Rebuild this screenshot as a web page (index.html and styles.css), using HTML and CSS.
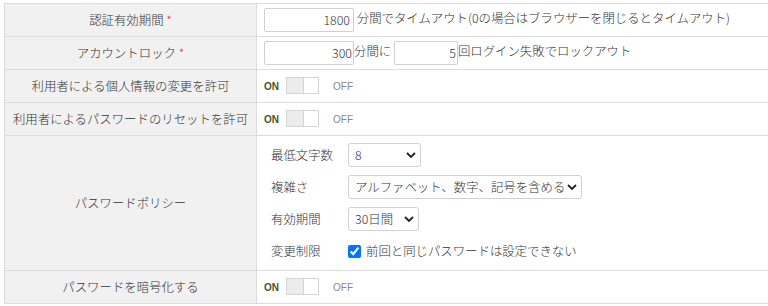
FILE: index.html
```html
<!DOCTYPE html>
<html lang="ja">
<head>
<meta charset="utf-8">
<link rel="stylesheet" href="styles.css">
</head>
<body>
<table class="settings">
  <tr>
    <th>認証有効期間 <span class="req">*</span></th>
    <td><input class="num w90" type="text" value="1800"> 分間でタイムアウト(0の場合はブラウザーを閉じるとタイムアウト)</td>
  </tr>
  <tr>
    <th>アカウントロック <span class="req">*</span></th>
    <td><input class="num tight w90" type="text" value="300">分間に <input class="num tight w64" type="text" value="5">回ログイン失敗でロックアウト</td>
  </tr>
  <tr>
    <th>利用者による個人情報の変更を許可</th>
    <td><div class="toggle"><span class="on">ON</span><span class="sw"><span class="knob"></span></span><span class="off">OFF</span></div></td>
  </tr>
  <tr>
    <th>利用者によるパスワードのリセットを許可</th>
    <td><div class="toggle"><span class="on">ON</span><span class="sw"><span class="knob"></span></span><span class="off">OFF</span></div></td>
  </tr>
  <tr class="policy-row">
    <th>パスワードポリシー</th>
    <td>
      <div class="policy">
        <div class="prow">
          <span class="plabel">最低文字数</span>
          <span class="sel w72"><select><option>8</option></select><svg class="chev" viewBox="0 0 10 6" width="10" height="6"><path d="M1 1 L5 5 L9 1" fill="none" stroke="#222" stroke-width="1.8"/></svg></span>
        </div>
        <div class="prow">
          <span class="plabel">複雑さ</span>
          <span class="sel w233"><select><option>アルファベット、数字、記号を含める</option></select><svg class="chev" viewBox="0 0 10 6" width="10" height="6"><path d="M1 1 L5 5 L9 1" fill="none" stroke="#222" stroke-width="1.8"/></svg></span>
        </div>
        <div class="prow">
          <span class="plabel">有効期間</span>
          <span class="sel w70"><select><option>30日間</option></select><svg class="chev" viewBox="0 0 10 6" width="10" height="6"><path d="M1 1 L5 5 L9 1" fill="none" stroke="#222" stroke-width="1.8"/></svg></span>
        </div>
        <div class="prow">
          <span class="plabel">変更制限</span>
          <label class="chk"><input type="checkbox" checked>前回と同じパスワードは設定できない</label>
        </div>
      </div>
    </td>
  </tr>
  <tr>
    <th>パスワードを暗号化する</th>
    <td><div class="toggle"><span class="on">ON</span><span class="sw"><span class="knob"></span></span><span class="off">OFF</span></div></td>
  </tr>
</table>
</body>
</html>
```
FILE: styles.css
```css
html, body {
  margin: 0;
  padding: 0;
  overflow: hidden;
  background: #fff;
}
body {
  padding: 3px 0 0 4px;
  font-family: "Noto Sans CJK JP", "Noto Sans", sans-serif;
  font-size: 12.4px;
  font-weight: 300;
  color: #333;
}
.settings {
  border-collapse: collapse;
  width: 790px;
  table-layout: fixed;
}
.settings th,
.settings td {
  border: 1px solid #dcdcdc;
  height: 32px;
  padding: 0;
  vertical-align: middle;
}
.settings th {
  width: 251px;
  background: #f1f1f1;
  font-weight: 300;
  text-align: center;
  white-space: nowrap;
}
.settings td {
  padding-left: 7px;
  white-space: nowrap;
}
.req {
  color: #e03a3a;
}
input.num {
  box-sizing: border-box;
  height: 24px;
  border: 1px solid #d0d0d0;
  border-radius: 2px;
  font: inherit;
  color: #333;
  text-align: right;
  padding: 0 3px 0 4px;
  vertical-align: middle;
  margin: 0;
}
input.num.tight {
  padding-right: 1px;
}
.w90 { width: 90px; }
.w64 { width: 64px; }
.toggle {
  display: flex;
  align-items: center;
  height: 32px;
}
.on {
  font-family: "Liberation Sans", Arial, sans-serif;
  font-size: 10px;
  font-weight: bold;
  color: #4e5224;
  width: 22px;
}
.off {
  font-family: "Liberation Sans", Arial, sans-serif;
  font-size: 10px;
  font-weight: normal;
  color: #888;
  margin-left: 14px;
}
.sw {
  box-sizing: border-box;
  width: 33px;
  height: 17px;
  border: 1px solid #d4d4d4;
  background: #fff;
  display: flex;
  margin-top: -2px;
}
.knob {
  width: 16px;
  height: 15px;
  background: #ececec;
  border-right: 1px solid #d4d4d4;
}
.policy-row th,
.policy-row td {
  height: 134px;
}
.policy {
  padding-left: 7px;
  display: flex;
  flex-direction: column;
}
.prow {
  height: 32px;
  display: flex;
  align-items: center;
}
.plabel {
  width: 77px;
}
.sel {
  position: relative;
  display: inline-block;
  height: 24px;
}
.sel select {
  appearance: none;
  -webkit-appearance: none;
  box-sizing: border-box;
  width: 100%;
  height: 24px;
  border: 1px solid #d0d0d0;
  border-radius: 3px;
  background: #fff;
  font: inherit;
  color: #333;
  padding: 0 12px 0 6px;
  margin: 0;
}
.chev {
  position: absolute;
  right: 5px;
  top: 9px;
}
.w72 { width: 73px; }
.w233 { width: 234px; }
.w70 { width: 71px; }
.chk {
  display: flex;
  align-items: center;
}
.chk input {
  width: 13px;
  height: 13px;
  margin: 0 5px 0 0;
  accent-color: #0075ff;
}
```
